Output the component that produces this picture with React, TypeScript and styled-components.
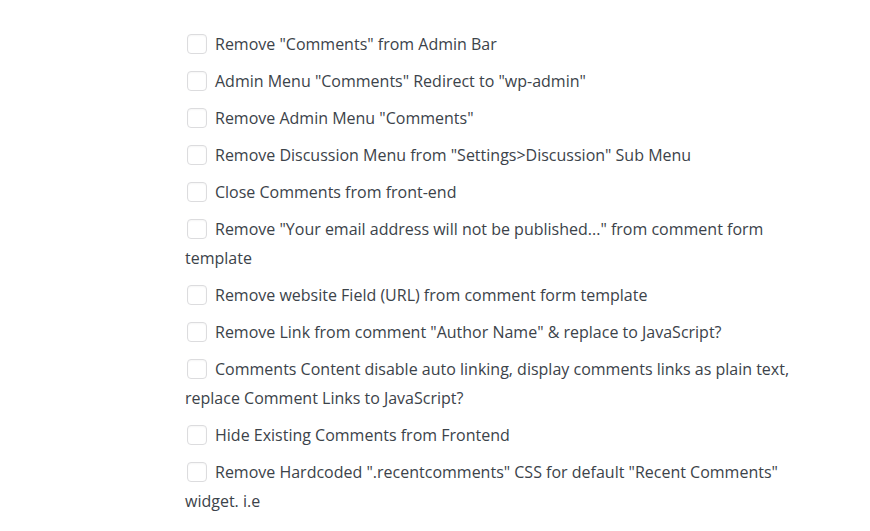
import React from "react";
import styled, { createGlobalStyle } from "styled-components";

const GlobalStyle = createGlobalStyle`
  body {
    margin: 0;
    background: #ffffff;
    font-family: "Open Sans", "Noto Sans", sans-serif;
  }
`;

const options = [
  'Remove "Comments" from Admin Bar',
  'Admin Menu "Comments" Redirect to "wp-admin"',
  'Remove Admin Menu "Comments"',
  'Remove Discussion Menu from "Settings>Discussion" Sub Menu',
  "Close Comments from front-end",
  'Remove "Your email address will not be published..." from comment form template',
  "Remove website Field (URL) from comment form template",
  'Remove Link from comment "Author Name" & replace to JavaScript?',
  "Comments Content disable auto linking, display comments links as plain text, replace Comment Links to JavaScript?",
  "Hide Existing Comments from Frontend",
  'Remove Hardcoded ".recentcomments" CSS for default "Recent Comments" widget. i.e',
];

const App = () => {
  return (
    <>
      <GlobalStyle />
      <StyledPanel>
        <StyledList>
          {options.map((text) => (
            <StyledOption key={text}>
              <StyledBox type="checkbox" />
              {text}
            </StyledOption>
          ))}
        </StyledList>
      </StyledPanel>
    </>
  );
};

const StyledPanel = styled.section`
  padding: 30px 0 0 185px;
`;

const StyledList = styled.div`
  width: 612px;
  display: flex;
  flex-direction: column;
  gap: 8px;
`;

const StyledOption = styled.label`
  display: block;
  font-size: 16px;
  line-height: 29px;
  color: #3c434a;
`;

const StyledBox = styled.input`
  appearance: none;
  width: 20px;
  height: 20px;
  margin: 0 8px 0 2px;
  vertical-align: -4px;
  border: 1px solid #dcdcde;
  border-radius: 4px;
  background: #fff;
  box-shadow: inset 0 1px 2px rgba(0, 0, 0, 0.04);
`;

export default App;
